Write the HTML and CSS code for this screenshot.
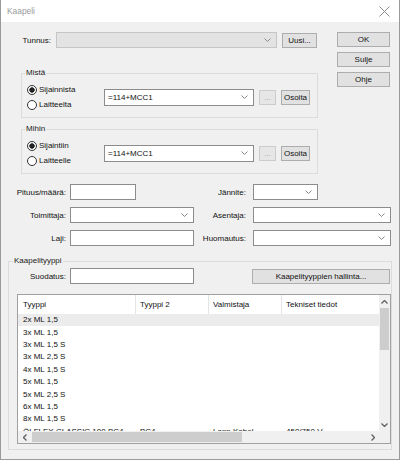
FILE: index.html
```html
<!DOCTYPE html>
<html lang="fi">
<head>
    <meta charset="UTF-8">
    <title>Kaapeli</title>
    <link rel="stylesheet" href="styles.css">
</head>
<body>
<div class="window">
    <div class="titlebar">
        <span class="title">Kaapeli</span>
        <svg class="close" width="11" height="11" viewBox="0 0 11 11">
            <path d="M0.5 0.5 L10.5 10.5 M10.5 0.5 L0.5 10.5" stroke="#8a8a8a" stroke-width="1" fill="none"/>
        </svg>
    </div>

    <div class="top">
        <div class="main">
            <div class="tunnus-row">
                <span class="tunnus-label">Tunnus:</span>
                <div class="combo combo-disabled tunnus-combo">
                    <span></span>
                    <svg class="chev" width="7" height="4" viewBox="0 0 7 4"><path d="M0.5 0.5 L3.5 3.5 L6.5 0.5" stroke="#888" fill="none"/></svg>
                </div>
                <button class="btn uusi">Uusi...</button>
            </div>

            <fieldset class="group place-group">
                <legend>Mistä</legend>
                <div class="place-row">
                    <div class="radios">
                        <div class="radio-row"><span class="radio checked"></span>Sijainnista</div>
                        <div class="radio-row"><span class="radio"></span>Laitteelta</div>
                    </div>
                    <div class="combo place-combo">
                        <span>=114+MCC1</span>
                        <svg class="chev" width="7" height="4" viewBox="0 0 7 4"><path d="M0.5 0.5 L3.5 3.5 L6.5 0.5" stroke="#888" fill="none"/></svg>
                    </div>
                    <button class="btn btn-disabled dots">...</button>
                    <button class="btn osoita">Osoita</button>
                </div>
            </fieldset>

            <fieldset class="group place-group second">
                <legend>Mihin</legend>
                <div class="place-row">
                    <div class="radios">
                        <div class="radio-row"><span class="radio checked"></span>Sijaintiin</div>
                        <div class="radio-row"><span class="radio"></span>Laitteelle</div>
                    </div>
                    <div class="combo place-combo">
                        <span>=114+MCC1</span>
                        <svg class="chev" width="7" height="4" viewBox="0 0 7 4"><path d="M0.5 0.5 L3.5 3.5 L6.5 0.5" stroke="#888" fill="none"/></svg>
                    </div>
                    <button class="btn btn-disabled dots">...</button>
                    <button class="btn osoita">Osoita</button>
                </div>
            </fieldset>
        </div>

        <div class="side">
            <button class="btn">OK</button>
            <button class="btn">Sulje</button>
            <button class="btn">Ohje</button>
        </div>
    </div>

    <div class="fields">
        <span class="lbl">Pituus/määrä:</span>
        <div class="input short-input"></div>
        <span class="lbl lbl2">Jännite:</span>
        <div class="combo short-combo">
            <span></span>
            <svg class="chev" width="7" height="4" viewBox="0 0 7 4"><path d="M0.5 0.5 L3.5 3.5 L6.5 0.5" stroke="#888" fill="none"/></svg>
        </div>

        <span class="lbl">Toimittaja:</span>
        <div class="combo">
            <span></span>
            <svg class="chev" width="7" height="4" viewBox="0 0 7 4"><path d="M0.5 0.5 L3.5 3.5 L6.5 0.5" stroke="#888" fill="none"/></svg>
        </div>
        <span class="lbl lbl2">Asentaja:</span>
        <div class="combo">
            <span></span>
            <svg class="chev" width="7" height="4" viewBox="0 0 7 4"><path d="M0.5 0.5 L3.5 3.5 L6.5 0.5" stroke="#888" fill="none"/></svg>
        </div>

        <span class="lbl">Laji:</span>
        <div class="input"></div>
        <span class="lbl lbl2">Huomautus:</span>
        <div class="combo">
            <span></span>
            <svg class="chev" width="7" height="4" viewBox="0 0 7 4"><path d="M0.5 0.5 L3.5 3.5 L6.5 0.5" stroke="#888" fill="none"/></svg>
        </div>
    </div>

    <fieldset class="group type-group">
        <legend>Kaapelityyppi</legend>
        <div class="filter-row">
            <span class="filter-label">Suodatus:</span>
            <div class="input filter-input"></div>
            <button class="btn manage">Kaapelityyppien hallinta...</button>
        </div>

        <div class="list">
            <div class="list-main">
                <div class="rows-area">
                    <div class="list-header">
                        <span class="c1">Tyyppi</span>
                        <span class="c2">Tyyppi 2</span>
                        <span class="c3">Valmistaja</span>
                        <span class="c4">Tekniset tiedot</span>
                    </div>
                    <div class="row selected"><span class="c1">2x ML 1,5</span></div>
                    <div class="row"><span class="c1">3x ML 1,5</span></div>
                    <div class="row"><span class="c1">3x ML 1,5 S</span></div>
                    <div class="row"><span class="c1">3x ML 2,5 S</span></div>
                    <div class="row"><span class="c1">4x ML 1,5 S</span></div>
                    <div class="row"><span class="c1">5x ML 1,5</span></div>
                    <div class="row"><span class="c1">5x ML 2,5 S</span></div>
                    <div class="row"><span class="c1">6x ML 1,5</span></div>
                    <div class="row"><span class="c1">8x ML 1,5 S</span></div>
                    <div class="row">
                        <span class="c1">ÖLFLEX CLASSIC 100 BC4</span>
                        <span class="c2">BC4</span>
                        <span class="c3">Lapp Kabel</span>
                        <span class="c4">450/750 V</span>
                    </div>
                </div>
                <div class="vscroll">
                    <div class="arrow">
                        <svg width="7" height="4" viewBox="0 0 7 4"><path d="M0.5 3.5 L3.5 0.5 L6.5 3.5" stroke="#606060" stroke-width="1.3" fill="none"/></svg>
                    </div>
                    <div class="vtrack"><div class="vthumb"></div></div>
                    <div class="arrow">
                        <svg width="7" height="4" viewBox="0 0 7 4"><path d="M0.5 0.5 L3.5 3.5 L6.5 0.5" stroke="#606060" stroke-width="1.3" fill="none"/></svg>
                    </div>
                </div>
            </div>
            <div class="hscroll-row">
                <div class="hscroll">
                    <div class="harrow">
                        <svg width="4" height="7" viewBox="0 0 4 7"><path d="M3.5 0.5 L0.5 3.5 L3.5 6.5" stroke="#606060" stroke-width="1.3" fill="none"/></svg>
                    </div>
                    <div class="htrack"><div class="hthumb"></div></div>
                    <div class="harrow">
                        <svg width="4" height="7" viewBox="0 0 4 7"><path d="M0.5 0.5 L3.5 3.5 L0.5 6.5" stroke="#606060" stroke-width="1.3" fill="none"/></svg>
                    </div>
                </div>
                <div class="corner"></div>
            </div>
        </div>
    </fieldset>
</div>
</body>
</html>
```

FILE: styles.css
```css
* {
    box-sizing: border-box;
}

body {
    margin: 0;
    background: #fff;
    font-family: "Liberation Sans", Arial, sans-serif;
    font-size: 8px;
    color: #111;
}

.window {
    width: 400px;
    height: 460px;
    background: #f0f0f0;
    border: 1px solid #9a9a9a;
    border-top: none;
    display: flex;
    flex-direction: column;
}

.titlebar {
    height: 22px;
    flex: none;
    background: #fff;
    display: flex;
    align-items: center;
    justify-content: space-between;
    padding: 0 9px 0 6px;
}

.title {
    font-size: 8.4px;
    color: #9a9a9a;
}

/* top part: Tunnus + groups on the left, dialog buttons on the right */
.top {
    display: flex;
    margin-top: 10px;
}

.main {
    width: 317px;
}

.tunnus-row {
    display: flex;
    align-items: center;
    height: 16px;
}

.tunnus-label {
    width: 50px;
    text-align: right;
    margin-right: 5px;
}

.tunnus-combo {
    width: 221px;
}

.uusi {
    width: 35px;
    margin-left: 5px;
}

.side {
    margin-left: 19px;
    width: 53px;
    display: flex;
    flex-direction: column;
    gap: 5px;
}

.btn {
    height: 15px;
    padding: 0;
    font-family: inherit;
    font-size: 8px;
    color: #111;
    background: #e1e1e1;
    border: 1px solid #adadad;
}

.btn-disabled {
    color: #a0a0a0;
    background: #e6e6e6;
    border-color: #cccccc;
}

.combo {
    height: 16px;
    display: flex;
    align-items: center;
    justify-content: space-between;
    padding: 0 5px 0 3px;
    background: #fff;
    border: 1px solid #8c8c8c;
}

.combo-disabled {
    background: #e3e3e3;
    border-color: #c6c6c6;
}

.input {
    height: 16px;
    background: #fff;
    border: 1px solid #8c8c8c;
}

/* group boxes */
.group {
    margin: 0;
    border: 1px solid #dcdcdc;
    min-width: 0;
}

.group legend {
    padding: 0 1px;
    height: 10px;
    line-height: 10px;
    color: #222;
}

.place-group {
    margin: 20px 0 0 20px;
    width: 297px;
    padding: 4px 5px 5px;
}

.place-group legend {
    margin-left: -2px;
}

.place-group.second {
    margin-top: 6px;
}

.place-row {
    display: flex;
    align-items: center;
    height: 30px;
}

.radios {
    width: 77px;
    display: flex;
    flex-direction: column;
}

.radio-row {
    height: 15px;
    display: flex;
    align-items: center;
}

.radio {
    width: 10px;
    height: 10px;
    margin-right: 2px;
    border: 1px solid #333;
    border-radius: 50%;
    background: #fff;
}

.radio.checked {
    background: radial-gradient(circle, #222 0 2.4px, #fff 3px);
}

.place-combo {
    width: 150px;
    height: 17px;
}

.dots {
    width: 17px;
    margin-left: 5px;
}

.osoita {
    width: 29px;
    margin-left: 5px;
}

/* the grid of plain fields */
.fields {
    display: grid;
    grid-template-columns: 69px 124px 59px 138px;
    grid-auto-rows: 16px;
    row-gap: 7px;
    margin-top: 10px;
    align-items: center;
}

.lbl {
    text-align: right;
    padding-right: 4px;
}

.lbl2 {
    padding-right: 7px;
}

.short-input {
    width: 66px;
}

.short-combo {
    width: 65px;
}

/* cable type group */
.type-group {
    margin: 10px 0 0 7px;
    width: 384px;
    padding: 2px 1px 5px 0;
}

.type-group legend {
    margin-left: 4px;
}

.filter-row {
    display: flex;
    align-items: center;
    height: 16px;
}

.filter-label {
    width: 57px;
    text-align: right;
    margin-right: 4px;
}

.filter-input {
    width: 124px;
}

.manage {
    width: 138px;
    margin-left: auto;
}

.list {
    margin: 10px 0 0 8px;
    width: 374px;
    height: 150px;
    background: #fff;
    border: 1px solid #a0a0a0;
    display: flex;
    flex-direction: column;
}

.list-main {
    display: flex;
    height: 136px;
}

.rows-area {
    flex: 1;
    overflow: hidden;
}

.list-header {
    display: flex;
    height: 18.6px;
}

.list-header span {
    display: flex;
    align-items: center;
}

.list-header .c2,
.list-header .c3,
.list-header .c4 {
    border-left: 1px solid #e5e5e5;
    padding-left: 4px;
}

.row {
    display: flex;
    align-items: center;
    height: 12.4px;
    white-space: nowrap;
}

.row.selected {
    background: #ececec;
}

.c1,
.c2,
.c3,
.c4 {
    padding-left: 5px;
    overflow: hidden;
    white-space: nowrap;
}

.c1 {
    width: 117px;
    flex: none;
}

.c2,
.c3 {
    width: 73px;
    flex: none;
}

.c4 {
    flex: 1;
}

.vscroll {
    width: 11px;
    background: #f0f0f0;
    display: flex;
    flex-direction: column;
}

.arrow {
    height: 13px;
    display: flex;
    align-items: center;
    justify-content: center;
}

.vtrack {
    flex: 1;
}

.vthumb {
    width: 9px;
    height: 42px;
    margin: 0 auto;
    background: #cdcdcd;
}

.hscroll-row {
    display: flex;
    height: 12px;
}

.hscroll {
    flex: 1;
    background: #f0f0f0;
    display: flex;
    align-items: center;
}

.harrow {
    width: 13px;
    height: 12px;
    display: flex;
    align-items: center;
    justify-content: center;
}

.htrack {
    flex: 1;
}

.hthumb {
    width: 210px;
    height: 10px;
    margin-left: 1px;
    background: #cdcdcd;
}

.corner {
    width: 11px;
    background: #f0f0f0;
}
```
